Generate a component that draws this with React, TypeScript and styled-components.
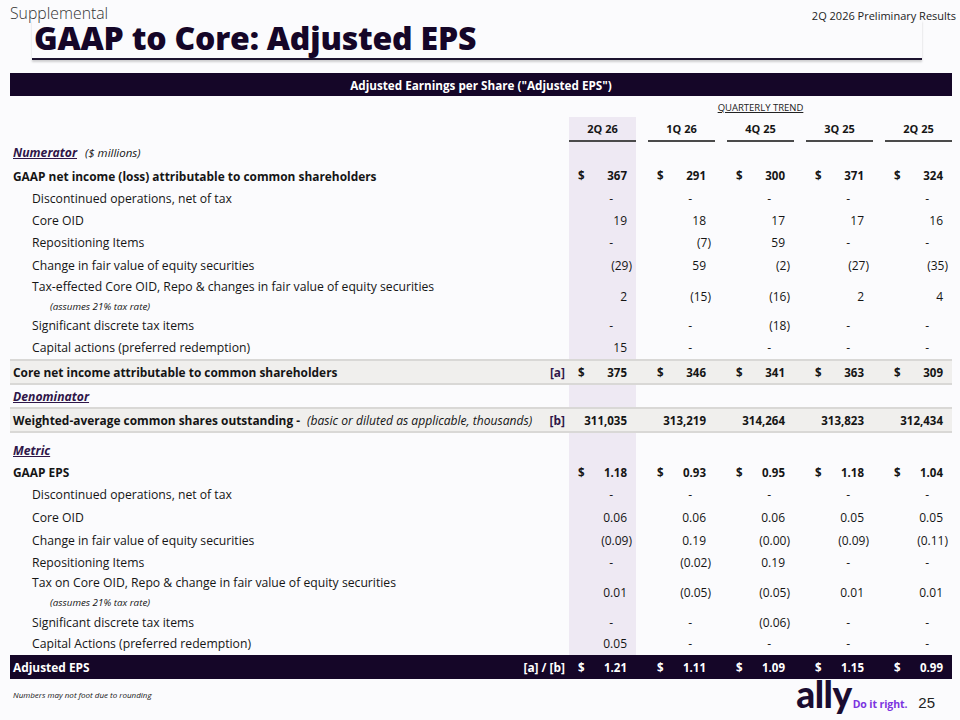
import React from "react";
import styled, { createGlobalStyle, css } from "styled-components";

const FONT = `"Open Sans", "Noto Sans", Arial, sans-serif`;
const NAVY = "#150628";
const PURPLE = "#2f1649";

const Global = createGlobalStyle`
  html, body { margin: 0; padding: 0; background: #fbfbfd; }
  body { font-family: ${FONT}; color: #151515; }
  * { box-sizing: border-box; }
`;

const Page = styled.div`
  width: 960px;
  height: 720px;
  padding: 0 8px 0 10px;
  display: flex;
  flex-direction: column;
  overflow: hidden;
`;

const TopLine = styled.div`
  display: flex;
  justify-content: space-between;
  align-items: flex-start;
  height: 20px;
  padding-top: 4px;
`;

const Kicker = styled.div`
  font-size: 15.8px;
  font-weight: 300;
  color: #333;
  line-height: 18px;
`;

const Edition = styled.div`
  font-size: 11px;
  color: #222;
  line-height: 16px;
  padding-top: 4px;
  margin-right: -4px;
`;

const TitleWrap = styled.div`
  margin: 0 30px 0 22px;
  border-bottom: 2px solid #1d1430;
  box-shadow: 0 2px 2px rgba(0, 0, 0, 0.18);
  height: 40px;
`;

const Title = styled.h1`
  margin: 0 0 0 2px;
  font-size: 32px;
  font-weight: 800;
  color: ${NAVY};
  line-height: 36px;
  letter-spacing: -0.2px;
`;

const Banner = styled.div`
  margin-top: 13px;
  height: 24px;
  background: ${NAVY};
  color: #fff;
  font-size: 11.7px;
  font-weight: 700;
  display: flex;
  align-items: center;
  justify-content: center;
`;

const Table = styled.div`
  display: flex;
  flex-direction: column;
`;

const Row = styled.div<{ $h: number; $band?: "gray" | "dark"; $align?: string }>`
  display: grid;
  grid-template-columns: 1fr repeat(5, 67px);
  column-gap: 12px;
  height: ${(p) => p.$h}px;
  align-items: ${(p) => p.$align || "center"};
  font-size: 12.2px;
  ${(p) =>
    p.$band === "gray" &&
    css`
      background: #f0efed;
      border-top: 2px solid #d9d8d6;
      border-bottom: 2px solid #d9d8d6;
    `}
  ${(p) =>
    p.$band === "dark" &&
    css`
      background: ${NAVY};
      color: #fff;
    `}
`;

const TrendRow = styled.div`
  display: grid;
  grid-template-columns: 1fr 383px;
  height: 21px;
  align-items: center;
`;

const TrendLabel = styled.div`
  grid-column: 2;
  text-align: center;
  font-size: 9.5px;
  text-decoration: underline;
  color: #222;
  padding-top: 1px;
`;

const Cell = styled.div<{ $hl?: boolean }>`
  align-self: stretch;
  display: flex;
  align-items: center;
  justify-content: space-between;
  padding: 0 9px;
  background: ${(p) => (p.$hl ? "#eee9f3" : "transparent")};
`;

const HeadCell = styled.div<{ $hl?: boolean }>`
  align-self: stretch;
  display: flex;
  align-items: center;
  justify-content: center;
  font-weight: 700;
  font-size: 11px;
  border-bottom: 2px solid #4a4a4a;
  background: ${(p) => (p.$hl ? "#eee9f3" : "transparent")};
`;

const Num = styled.span<{ $kind: "neg" | "dash" | "pos"; $bold?: boolean }>`
  font-weight: ${(p) => (p.$bold ? 700 : 400)};
  font-size: ${(p) => (p.$bold ? "11.5px" : "12px")};
  margin-left: auto;
  margin-right: ${(p) => (p.$kind === "neg" ? "-5px" : p.$kind === "dash" ? "14px" : "0")};
`;

const Dollar = styled.span`
  font-weight: 700;
  font-size: 11.5px;
`;

const LabelCell = styled.div<{ $indent?: boolean; $bold?: boolean; $pb?: number }>`
  display: flex;
  align-items: center;
  padding-left: ${(p) => (p.$indent ? "22px" : "3px")};
  padding-bottom: ${(p) => p.$pb || 0}px;
  font-weight: ${(p) => (p.$bold ? 700 : 400)};
  font-size: ${(p) => (p.$bold ? "11.9px" : "12.2px")};
  white-space: nowrap;
  margin-right: -8px;
`;

const LabelStack = styled.div`
  display: flex;
  flex-direction: column;
  padding-left: 22px;
  align-self: start;
`;

const StackMain = styled.div`
  height: 20px;
  display: flex;
  align-items: center;
`;

const SubNote = styled.div`
  font-size: 9.8px;
  font-style: italic;
  padding-left: 18px;
  height: 21px;
  display: flex;
  align-items: center;
`;

const Tag = styled.span<{ $light?: boolean }>`
  margin-left: auto;
  font-weight: 700;
  color: ${(p) => (p.$light ? "#fff" : PURPLE)};
`;

const Section = styled.span`
  font-weight: 700;
  font-style: italic;
  text-decoration: underline;
  color: ${PURPLE};
  font-size: 12.2px;
`;

const Aside = styled.span`
  font-style: italic;
  font-weight: 400;
  margin-left: 8px;
  font-size: 11.5px;
`;

const AsideInline = styled(Aside)`
  margin-left: 7px;
  font-size: 12.1px;
`;

const Footer = styled.div`
  display: flex;
  justify-content: space-between;
  align-items: flex-start;
  height: 41px;
`;

const Note = styled.div`
  font-size: 8px;
  font-style: italic;
  padding: 10px 0 0 3px;
`;

const Brand = styled.div`
  display: flex;
  align-items: baseline;
  margin-right: 17px;
`;

const AllyMark = styled.span`
  font-family: Lato, "Open Sans", sans-serif;
  font-weight: 900;
  font-size: 37px;
  line-height: 30px;
  letter-spacing: -0.5px;
  color: #1a0c30;
`;

const Tagline = styled.span`
  font-weight: 700;
  font-size: 10.5px;
  color: #7b35e0;
  margin-left: 1px;
  letter-spacing: -0.1px;
`;

const PageNum = styled.span`
  font-family: "Liberation Sans", Arial, sans-serif;
  font-size: 15px;
  color: #222;
  margin-left: 11px;
`;

type Line = {
  label: string;
  vals: string[];
  bold?: boolean;
  dollar?: boolean;
  indent?: boolean;
  sub?: string;
  h: number;
};

const kindOf = (v: string): "neg" | "dash" | "pos" =>
  v === "-" ? "dash" : v.startsWith("(") ? "neg" : "pos";

const Values: React.FC<{ vals: string[]; bold?: boolean; dollar?: boolean; hl?: boolean }> = ({
  vals,
  bold,
  dollar,
  hl = true,
}) => (
  <>
    {vals.map((v, i) => (
      <Cell key={i} $hl={hl && i === 0}>
        {dollar && <Dollar>$</Dollar>}
        <Num $kind={kindOf(v)} $bold={bold}>
          {v}
        </Num>
      </Cell>
    ))}
  </>
);

const numerator: Line[] = [
  { label: "GAAP net income (loss) attributable to common shareholders", bold: true, dollar: true, vals: ["367", "291", "300", "371", "324"], h: 25 },
  { label: "Discontinued operations, net of tax", indent: true, vals: ["-", "-", "-", "-", "-"], h: 21 },
  { label: "Core OID", indent: true, vals: ["19", "18", "17", "17", "16"], h: 22 },
  { label: "Repositioning Items", indent: true, vals: ["-", "(7)", "59", "-", "-"], h: 23 },
  { label: "Change in fair value of equity securities", indent: true, vals: ["(29)", "59", "(2)", "(27)", "(35)"], h: 22 },
  { label: "Tax-effected Core OID, Repo & changes in fair value of equity securities", sub: "(assumes 21% tax rate)", indent: true, vals: ["2", "(15)", "(16)", "2", "4"], h: 39 },
  { label: "Significant discrete tax items", indent: true, vals: ["-", "-", "(18)", "-", "-"], h: 21 },
  { label: "Capital actions (preferred redemption)", indent: true, vals: ["15", "-", "-", "-", "-"], h: 23 },
];

const metric: Line[] = [
  { label: "GAAP EPS", bold: true, dollar: true, vals: ["1.18", "0.93", "0.95", "1.18", "1.04"], h: 22 },
  { label: "Discontinued operations, net of tax", indent: true, vals: ["-", "-", "-", "-", "-"], h: 23 },
  { label: "Core OID", indent: true, vals: ["0.06", "0.06", "0.06", "0.05", "0.05"], h: 23 },
  { label: "Change in fair value of equity securities", indent: true, vals: ["(0.09)", "0.19", "(0.00)", "(0.09)", "(0.11)"], h: 23 },
  { label: "Repositioning Items", indent: true, vals: ["-", "(0.02)", "0.19", "-", "-"], h: 20 },
  { label: "Tax on Core OID, Repo & change in fair value of equity securities", sub: "(assumes 21% tax rate)", indent: true, vals: ["0.01", "(0.05)", "(0.05)", "0.01", "0.01"], h: 40 },
  { label: "Significant discrete tax items", indent: true, vals: ["-", "-", "(0.06)", "-", "-"], h: 20 },
  { label: "Capital Actions (preferred redemption)", indent: true, vals: ["0.05", "-", "-", "-", "-"], h: 23 },
];

const LineRow: React.FC<{ line: Line }> = ({ line }) =>
  line.sub ? (
    <Row $h={line.h}>
      <LabelStack>
        <StackMain>{line.label}</StackMain>
        <SubNote>{line.sub}</SubNote>
      </LabelStack>
      <Values vals={line.vals} bold={line.bold} dollar={line.dollar} />
    </Row>
  ) : (
    <Row $h={line.h}>
      <LabelCell $indent={line.indent} $bold={line.bold}>
        {line.label}
      </LabelCell>
      <Values vals={line.vals} bold={line.bold} dollar={line.dollar} />
    </Row>
  );

const EmptyCells: React.FC = () => (
  <>
    <Cell $hl />
    <Cell />
    <Cell />
    <Cell />
    <Cell />
  </>
);

const quarters = ["2Q 26", "1Q 26", "4Q 25", "3Q 25", "2Q 25"];

export default function App() {
  return (
    <Page>
      <Global />
      <TopLine>
        <Kicker>Supplemental</Kicker>
        <Edition>2Q 2026 Preliminary Results</Edition>
      </TopLine>
      <TitleWrap>
        <Title>GAAP to Core: Adjusted EPS</Title>
      </TitleWrap>
      <Banner>Adjusted Earnings per Share ("Adjusted EPS")</Banner>
      <Table>
        <TrendRow>
          <TrendLabel>QUARTERLY TREND</TrendLabel>
        </TrendRow>
        <Row $h={25}>
          <div />
          {quarters.map((q, i) => (
            <HeadCell key={q} $hl={i === 0}>
              {q}
            </HeadCell>
          ))}
        </Row>
        <Row $h={21}>
          <LabelCell>
            <Section>Numerator</Section>
            <Aside>($ millions)</Aside>
          </LabelCell>
          <EmptyCells />
        </Row>
        {numerator.map((l, i) => (
          <LineRow key={"n" + i} line={l} />
        ))}
        <Row $h={26} $band="gray">
          <LabelCell $bold>
            Core net income attributable to common shareholders
            <Tag>[a]</Tag>
          </LabelCell>
          <Values vals={["375", "346", "341", "363", "309"]} bold dollar hl={false} />
        </Row>
        <Row $h={22}>
          <LabelCell>
            <Section>Denominator</Section>
          </LabelCell>
          <EmptyCells />
        </Row>
        <Row $h={26} $band="gray">
          <LabelCell $bold>
            Weighted-average common shares outstanding -
            <AsideInline>(basic or diluted as applicable, thousands)</AsideInline>
            <Tag>[b]</Tag>
          </LabelCell>
          <Values vals={["311,035", "313,219", "314,264", "313,823", "312,434"]} bold hl={false} />
        </Row>
        <Row $h={28} $align="end">
          <LabelCell $pb={2}>
            <Section>Metric</Section>
          </LabelCell>
          <EmptyCells />
        </Row>
        {metric.map((l, i) => (
          <LineRow key={"m" + i} line={l} />
        ))}
        <Row $h={24} $band="dark">
          <LabelCell $bold>
            Adjusted EPS
            <Tag $light>[a] / [b]</Tag>
          </LabelCell>
          <Values vals={["1.21", "1.11", "1.09", "1.15", "0.99"]} bold dollar hl={false} />
        </Row>
      </Table>
      <Footer>
        <Note>Numbers may not foot due to rounding</Note>
        <Brand>
          <AllyMark>ally</AllyMark>
          <Tagline>Do it right.</Tagline>
          <PageNum>25</PageNum>
        </Brand>
      </Footer>
    </Page>
  );
}
